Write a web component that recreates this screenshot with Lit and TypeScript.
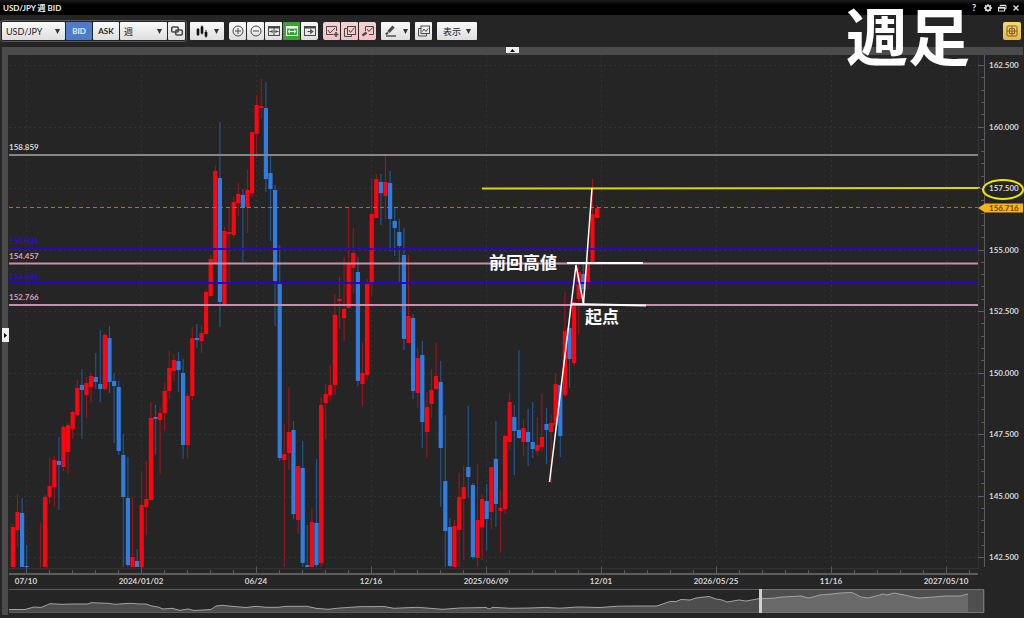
import { LitElement, html, css, svg } from "lit";
import { customElement, state } from "lit/decorators.js";

type Candle = [number, "r" | "b", number, number, number, number];

// slot, colour, wick top, body top, body bottom, wick bottom
const CANDLES: Candle[] = [
  [0,"r",524,527,567,567],[1,"r",494,512,530,547],[2,"b",498,513,567,567],[3,"b",545,566,567,567],
  [6,"r",523,567,567,567],[7,"r",495,497,567,567],[8,"r",458,486,497,504],[9,"r",456,460,487,507],
  [10,"b",437,461,465,510],[11,"r",425,427,467,471],[12,"r",423,425,452,474],[13,"r",411,412,429,439],
  [14,"r",380,388,415,416],[15,"b",369,385,390,439],[16,"r",377,383,395,418],[17,"r",373,376,387,403],
  [18,"b",353,377,382,389],[19,"b",330,384,389,402],[20,"r",333,335,389,391],[21,"b",326,338,382,393],
  [22,"b",373,381,386,443],[23,"b",381,387,451,455],[24,"b",434,455,497,567],[25,"b",457,498,565,567],
  [26,"r",497,557,567,567],[27,"b",549,561,567,567],[28,"r",472,505,567,567],[29,"r",461,499,507,535],
  [30,"r",402,418,500,501],[31,"b",405,417,419,455],[32,"r",407,413,420,474],[33,"r",383,391,413,431],
  [34,"r",351,368,391,399],[35,"r",354,360,371,381],[36,"b",352,361,370,392],[37,"b",359,373,445,459],
  [38,"r",393,396,445,459],[39,"r",327,338,396,400],[40,"b",324,338,340,348],[41,"r",325,333,341,353],
  [42,"r",290,292,334,335],[43,"r",255,259,296,297],[44,"r",165,171,263,263],[45,"b",122,178,302,327],
  [46,"r",227,231,304,304],[47,"r",207,232,234,283],[48,"r",196,202,235,238],[49,"r",183,194,203,216],
  [50,"b",189,195,208,262],[51,"r",170,190,207,233],[52,"r",132,132,193,197],[53,"r",95,105,134,158],
  [54,"r",79,106,108,119],[55,"b",82,108,179,192],[56,"b",155,173,189,241],[57,"b",185,190,281,326],
  [58,"b",245,283,458,461],[59,"r",424,454,460,567],[60,"r",387,432,453,470],[61,"b",421,430,514,519],
  [62,"r",466,466,520,534],[63,"b",441,468,563,567],[64,"b",525,565,567,567],[65,"r",508,522,567,567],
  [66,"b",459,523,565,567],[67,"r",397,405,563,567],[68,"r",384,394,403,439],[69,"r",365,385,395,401],
  [70,"r",294,315,385,395],[71,"r",277,299,301,329],[72,"r",257,309,318,341],[73,"r",207,263,308,309],
  [74,"r",228,253,268,293],[75,"b",257,272,381,386],[76,"r",342,373,384,406],[77,"r",279,283,375,380],
  [78,"r",178,214,283,295],[79,"r",174,179,218,218],[80,"b",174,182,193,225],[81,"r",156,182,196,219],
  [82,"b",171,183,219,251],[83,"b",207,221,228,256],[84,"b",219,232,246,282],[85,"b",228,255,339,350],
  [86,"r",255,316,343,343],[87,"b",314,318,391,399],[88,"r",348,358,393,408],[89,"b",341,355,422,448],
  [90,"r",392,407,432,458],[91,"r",369,390,404,418],[92,"r",343,376,389,389],[93,"b",361,382,448,507],
  [94,"b",415,481,531,567],[95,"b",518,527,566,567],[96,"r",520,526,567,567],[97,"r",473,497,530,567],
  [98,"r",466,487,499,560],[99,"b",406,467,477,498],[100,"b",483,485,557,559],[101,"r",464,520,558,567],
  [102,"r",494,499,527,560],[103,"b",484,501,519,550],[104,"r",467,467,512,529],[105,"b",421,459,504,527],
  [106,"r",490,508,511,553],[107,"r",434,436,509,514],[108,"r",393,402,442,450],[109,"b",405,417,431,475],
  [110,"b",350,430,438,439],[111,"r",419,428,442,456],[112,"b",409,432,442,466],[113,"b",402,442,449,458],
  [114,"r",417,445,451,455],[115,"r",394,437,447,452],[116,"b",408,424,430,464],[117,"r",415,423,432,483],
  [118,"r",374,384,425,425],[119,"b",385,385,436,457],[120,"r",292,331,395,397],[121,"b",308,328,359,388],
  [122,"r",302,302,363,366],[123,"r",265,272,299,335],[124,"b",264,274,289,303],[125,"r",262,262,283,289],
  [126,"r",179,214,262,262],[127,"r",205,208,218,218],
];

const DATES = ["07/10","2024/01/02","06/24","12/16","2025/06/09","12/01","2026/05/25","11/16","2027/05/10"];
const PRICES = ["162.500","160.000","157.500","155.000","152.500","150.000","147.500","145.000","142.500"];

const OVERVIEW =
  "9,609.5 25,609.5 34,607 41,607.5 50,603.7 62,604.3 72,604 88,604 91,602.7 108,603.3 115,604.3 130,603.3 140,604 146,604 152,606 158,607 163,609 172,608.3 180,610.3 188,609 194,610.5 211,609.5 216,606 222,605.3 232,606.3 246,607.5 256,606.3 266,607.3 278,607.3 286,606.3 307,606.3 316,608.3 328,609.3 340,608 360,606.7 384,606.5 394,608.3 417,607.3 443,609.3 460,608 486,607.5 489,609 493,607.3 510,608.3 530,608 545,607.4 560,608.2 578,607 600,607.5 618,606.2 640,606 657,606 664,603.5 670,601.5 676,601.5 681,599.5 690,600 696,598 709,596.5 716,599 722,600 727,602 739,600 746,601 760,598.5 768,598.5 775,598 782,597 801,596 808,598 813,597 820,595 832,594 840,593 852,592.5 861,597 868,598 876,596 883,594 887,595 894,593 904,595 918,598 928,597.5 945,596 960,596 968,594";

const slotX = (i: number) => 12.8 + i * 4.6;
const dateX = (i: number) => 26 + i * 115;
const priceY = (i: number) => Math.round(65 + i * 61.5);

@customElement("trade-chart")
export class TradeChart extends LitElement {
  static styles = css`
    :host { display: block; min-width: 0; }
    svg { display: block; width: 100%; height: auto; }
    text { font-family: Lato, "Noto Sans CJK JP", sans-serif; font-size: 8px; font-weight: 700; fill: #d6d6d6; }
    .mid { text-anchor: middle; }
    .grid { stroke: #323232; stroke-dasharray: 2 3; fill: none; }
    .axis { stroke: #5c5c5c; fill: none; }
    .frame { stroke: #333; fill: none; }
    .wr { fill: #96161a; }
    .wb { fill: #20568f; }
    .br { fill: #fb0610; }
    .bb { fill: #307de2; }
    .gray { stroke: #858585; stroke-width: 2; }
    .pink { stroke: #c98dab; stroke-width: 2; }
    .blue { stroke: #2b05c4; stroke-width: 2; }
    .now { stroke: #9c7820; stroke-width: 1; stroke-dasharray: 4 3; }
    .target { stroke: #e2d400; stroke-width: 2; }
    .draw { stroke: #fff; stroke-width: 2; fill: none; }
    .thin { stroke: #fff; stroke-width: 1.5; fill: none; }
    .ring { stroke: #f0e400; stroke-width: 2; fill: none; }
    .tag { fill: #f5b21c; }
    text.tag-text { fill: #6b4a05; }
    text.pink-text { fill: #dda0bd; }
    text.blue-text { fill: #3208d8; }
    text.note { font-family: "Noto Sans CJK JP", sans-serif; font-size: 17px; font-weight: 700; fill: #fff; }
    .area { fill: #4d4d4d; }
    .trace { stroke: #a2a2a2; fill: none; }
    .range { fill: #a0a0a0; fill-opacity: 0.34; stroke: #757575; }
    .grip { fill: #d0d0d0; }
  `;

  render() {
    return html`
      <svg viewBox="9 55 1015 563" role="img" aria-label="USD/JPY 週足">
        ${DATES.map((_, i) => svg`<path class="grid" d="M${dateX(i) + 0.5} 55V567" />`)}
        ${PRICES.map((_, i) => svg`<path class="grid" d="M9 ${priceY(i) + 0.5}H978" />`)}
        <path class="frame" d="M9 568.5H978.5V55" />
        ${CANDLES.map(([i, c, high, top, bottom, low]) => {
          const x = slotX(i);
          return svg`
            <rect class=${"w" + c} x=${x - 0.5} y=${high} width="1.2" height=${low - high} />
            <rect class=${"b" + c} x=${x - 2} y=${top} width="4.2" height=${bottom - top} />`;
        })}
        <path class="gray" d="M9 155H978" />
        <path class="now" d="M9 207.5H978" />
        <path class="blue" d="M9 249H978M9 283H978" />
        <path class="pink" d="M9 263.5H978M9 305H978" />
        <text x="9" y="150">158.859</text>
        <text class="blue-text" x="9" y="244">155.034</text>
        <text class="pink-text" x="9" y="259">154.457</text>
        <text class="blue-text" x="9" y="279">153.646</text>
        <text class="pink-text" x="9" y="300">152.766</text>

        <path class="target" d="M482 188.5L980 188" />
        <path class="draw" d="M567 263H643M572 304L646 305.5" />
        <path class="thin" d="M549.5 482L576 265L583.5 304L592 188" />
        <text class="note" x="489" y="269">前回高値</text>
        <text class="note" x="585" y="323">起点</text>

        <path class="axis" d="M984.5 55V567" />
        ${Array.from({ length: 41 }, (_, i) => svg`<path class="axis"
          d="M${i % 5 ? 981 : 978} ${Math.round(65 + i * 12.3) + 0.5}H984" />`)}
        ${PRICES.map((p, i) => svg`<text x="989" y=${priceY(i) + 3}>${p}</text>`)}
        <path class="tag" d="M978 208L985 203.5H1023V212.5H985Z" />
        <text class="tag-text" x="989" y="211">156.716</text>
        <ellipse class="ring" cx="1003" cy="189.5" rx="20" ry="9.5" />

        <path class="axis" d="M9 574H978" stroke-width="2" />
        ${Array.from({ length: 42 }, (_, i) => svg`<path class="axis"
          d="M${26 + i * 23 + 0.5} ${i % 5 ? 570 : 567}V574" />`)}
        ${DATES.map((d, i) => svg`<text class="mid" x=${dateX(i)} y="584">${d}</text>`)}

        <path class="axis" d="M9 589.5H984V612.5H9" />
        <polygon class="area" points="9,612 ${OVERVIEW} 968,612" />
        <polyline class="trace" points=${OVERVIEW} />
        <rect class="range" x="761.5" y="589.5" width="222" height="23" />
        <rect class="grip" x="759" y="589" width="3" height="24" />
      </svg>
    `;
  }
}

const icon = (body: unknown) => html`<svg class="icon" viewBox="0 0 14 14" aria-hidden="true">${body}</svg>`;

const ICONS = {
  link: svg`<rect x="1.7" y="3" width="6.6" height="5" rx="1.2" stroke-width="1.6"/><rect x="5.7" y="6" width="6.6" height="5" rx="1.2" stroke-width="1.6"/>`,
  candles: svg`<path d="M3 4v8M7 1.5v9M11 6v7.500" stroke="#111"/><path d="M3 5v6M7 2.500v7M11 8v4.500" stroke="#111" stroke-width="2.600"/>`,
  plus: svg`<circle cx="7" cy="7" r="5"/><path d="M4 7h6M7 4v6"/>`,
  minus: svg`<circle cx="7" cy="7" r="5"/><path d="M4 7h6"/>`,
  narrow: svg`<rect x="1.5" y="2.5" width="11" height="9"/><path d="M1.5 3.5h11" stroke-width="2"/><path d="M7 4v7M2.5 7.5h3M11.5 7.5h-3M4.5 6L6 7.5L4.5 9M9.5 6L8 7.5L9.5 9"/>`,
  widen: svg`<rect x="1.5" y="2.5" width="11" height="9"/><path d="M1.5 3.5h11" stroke-width="2"/><path d="M3 7.5h8M5 5.8L3 7.5L5 9.2M9 5.8L11 7.5L9 9.2"/>`,
  latest: svg`<rect x="1.5" y="2.5" width="11" height="9"/><path d="M1.5 3.5h11" stroke-width="2"/><path d="M4.500 7.5h4M7.8 6L9.8 7.5L7.8 9Z" stroke-width="1.2"/>`,
  add: svg`<path d="M8 10.5H1.5V2.5H11.5V7"/><path d="M3 6L5 9L10 4"/><path d="M8.5 10.5h5M11 8v5" stroke-width="1.6"/>`,
  copy: svg`<path d="M4 4.5H1.5V12.5H8.5V10.5"/><rect x="4.5" y="2.5" width="8" height="8"/><path d="M6 6L7.5 8.5L11.5 3.5"/>`,
  edit: svg`<path d="M4.5 7V2.5H12.5V10.5H8"/><path d="M6 5L8 7.5L11.5 3.5"/><path d="M1.5 11.5L5.500 8.5" stroke-width="2.4"/>`,
  pencil: svg`<path d="M4.500 8L9.500 2.5" stroke-width="3.2"/><path d="M1.8 10.5L4 8.500" stroke-width="2"/><path d="M2 12H12" stroke-width="1.4"/>`,
  windows: svg`<path d="M4 4.5H1.5V12H9.5V10"/><rect x="4" y="2" width="8.5" height="7.5"/><path d="M5.5 7.5L7 5L9 7.5L11 4.5"/>`,
  tiles: svg`<rect x="2" y="2" width="10" height="10" rx="1"/><path d="M7 2v10M2 7h10M4.5 4.500h5v5h-5z"/>`,
};

@customElement("app-root")
export class AppRoot extends LitElement {
  @state() private side = "BID";

  static styles = css`
    :host {
      display: flex; flex-direction: column; position: relative;
      min-height: 100vh; box-sizing: border-box;
      background: #252525; color: #eee;
      font-family: Lato, "Noto Sans CJK JP", sans-serif; font-size: 9px;
    }
    button, select { font: inherit; color: inherit; border: 0; margin: 0; padding: 0; background: none; }
    .title {
      display: flex; align-items: center; justify-content: space-between;
      height: 15px; padding: 0 3px; background: linear-gradient(#1c1c1c, #000 5px);
    }
    .title h1 { margin: 0; font-size: 8px; line-height: 12px; font-weight: 700; }
    .window { display: flex; gap: 4px; }
    .window button { display: grid; place-items: center; width: 10px; height: 12px; font-weight: 700; }
    .window svg { width: 10px; height: 10px; fill: none; stroke: #e0e0e0; }
    .tools { display: flex; align-items: center; gap: 5px; height: 32px; padding: 0 3px 0 0; }
    .market { display: flex; gap: 1px; padding: 1px; border: 1px solid #555; border-radius: 3px; margin-right: -2px; }
    .set { display: flex; gap: 1px; border-radius: 2px; overflow: hidden; }
    .key, .pick {
      display: flex; align-items: center; justify-content: center; gap: 5px;
      height: 18px; min-width: 17px; background: linear-gradient(#fafafa, #dedede);
      color: #222; border-radius: 1px;
    }
    .side { width: 26px; font-size: 8px; font-weight: 700; }
    .key.on { background: #4d7cc9; color: #e6efff; }
    .key.green { background: #3aa335; color: #fff; }
    .pinkish .key { background: linear-gradient(#f4d3d3, #f8c0c4); }
    .wide { width: 34px; }
    .pen { width: 29px; }
    .show { width: 40px; }
    .pick { padding: 0 5px 0 4px; }
    .pick select { flex: 1; min-width: 0; appearance: none; outline: 0; }
    .pair { width: 54px; }
    .term { width: 38px; }
    .arrow { width: 5px; height: 5px; fill: #333; flex: none; }
    .icon { width: 14px; height: 14px; fill: none; stroke: #4a4a4a; flex: none; }
    .green .icon { stroke: #fff; }
    .gold { margin-left: auto; width: 18px; background: linear-gradient(#f6da6c, #e8b84a); border-radius: 2px; }
    .gold .icon { stroke: #80602a; }
    .rail { display: grid; justify-items: center; align-items: start; height: 8px; margin: 0 1px 0 2px; background: #4b4b4b; }
    .rail button { display: grid; place-items: center; width: 13px; height: 6px; background: #eee; }
    .main { display: flex; align-items: flex-start; }
    .edge { align-self: stretch; display: grid; align-items: center; width: 6px; margin: 0 1px 3px 2px; background: #4b4b4b; }
    .edge button { display: grid; place-items: center; width: 7px; height: 14px; background: #eee; }
    .main trade-chart { flex: 1; }
    .caption {
      position: absolute; right: 54px; top: 0; margin: 0;
      font-family: "Noto Sans CJK JP", sans-serif; font-weight: 700; font-size: 62px; line-height: 68px; color: #fff;
      pointer-events: none;
    }
  `;

  private arrow() {
    return html`<svg class="arrow" viewBox="0 0 5 5" aria-hidden="true"><path d="M0 0H5L2.5 5Z" /></svg>`;
  }

  private key(name: keyof typeof ICONS, label: string, extra = "", drop = false) {
    return html`<button class="key ${extra}" aria-label=${label}>${icon(ICONS[name])}${drop ? this.arrow() : ""}</button>`;
  }

  render() {
    return html`
      <header class="title">
        <h1>USD/JPY 週 BID</h1>
        <div class="window">
          <button aria-label="ヘルプ">?</button>
          <button aria-label="設定"><svg viewBox="0 0 10 10"><circle cx="5" cy="5" r="2.3" stroke-width="1.6"/><path d="M5 1v1.5M5 7.5V9M1 5h1.5M7.5 5H9M2.2 2.2l1 1M6.8 6.8l1 1M7.8 2.2l-1 1M3.2 6.8l-1 1" stroke-width="1.3"/></svg></button>
          <button aria-label="元に戻す"><svg viewBox="0 0 10 10"><path d="M3 3.5V2.5H9V6H7.5"/><rect x="1.5" y="4.5" width="6" height="3.5"/><path d="M1.5 5h6M3 2.5h6" stroke-width="1.4"/></svg></button>
          <button aria-label="閉じる"><svg viewBox="0 0 10 10"><path d="M2.5 2.5L7.5 7.5M7.5 2.5L2.5 7.5" stroke-width="1.3"/></svg></button>
        </div>
      </header>
      <nav class="tools">
        <div class="market">
          <label class="pick pair"><select aria-label="通貨ペア"><option>USD/JPY</option></select>${this.arrow()}</label>
          ${["BID", "ASK"].map(
            (s) => html`<button class="key side ${this.side === s ? "on" : ""}" @click=${() => (this.side = s)}>${s}</button>`
          )}
          <label class="pick term"><select aria-label="足種"><option>週</option></select>${this.arrow()}</label>
          ${this.key("link", "連動")}
        </div>
        ${this.key("candles", "チャート種別", "wide", true)}
        <div class="set">
          ${this.key("plus", "拡大")}${this.key("minus", "縮小")}${this.key("narrow", "間隔を狭く")}
          ${this.key("widen", "間隔を広く", "green")}${this.key("latest", "最新へ")}
        </div>
        <div class="set pinkish">
          ${this.key("add", "追加")}${this.key("copy", "複製")}${this.key("edit", "編集")}
        </div>
        ${this.key("pencil", "描画", "pen", true)}
        ${this.key("windows", "保存画面")}
        <button class="key show">表示${this.arrow()}</button>
        ${this.key("tiles", "配置", "gold")}
      </nav>
      <div class="rail"><button aria-label="上部を閉じる"><svg width="5" height="3"><path d="M0 3L2.5 0L5 3Z" /></svg></button></div>
      <main class="main">
        <div class="edge"><button aria-label="左を開く"><svg width="3" height="5"><path d="M0 0L3 2.5L0 5Z" /></svg></button></div>
        <trade-chart></trade-chart>
      </main>
      <p class="caption">週足</p>
    `;
  }
}
